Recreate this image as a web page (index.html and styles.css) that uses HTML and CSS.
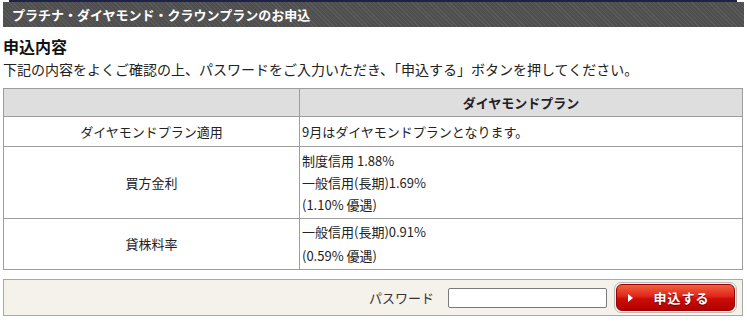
FILE: index.html
```html
<!DOCTYPE html>
<html lang="ja">
<head>
<meta charset="utf-8">
<title>プラチナ・ダイヤモンド・クラウンプランのお申込</title>
<link rel="stylesheet" href="styles.css">
</head>
<body>
<div class="page">
  <div class="topline"></div>
  <h1 class="titlebar">プラチナ・ダイヤモンド・クラウンプランのお申込</h1>
  <h2 class="heading">申込内容</h2>
  <p class="desc">下記の内容をよくご確認の上、パスワードをご入力いただき、「申込する」ボタンを押してください。</p>
  <table class="plan">
    <tr class="r-head">
      <th class="c-left"></th>
      <th class="c-right">ダイヤモンドプラン</th>
    </tr>
    <tr class="r-apply">
      <td class="c-left">ダイヤモンドプラン適用</td>
      <td class="c-right">9月はダイヤモンドプランとなります。</td>
    </tr>
    <tr class="r-buy">
      <td class="c-left">買方金利</td>
      <td class="c-right">制度信用 1.88%<br>一般信用(長期)1.69%<br>(1.10% 優遇)</td>
    </tr>
    <tr class="r-lend">
      <td class="c-left">貸株料率</td>
      <td class="c-right">一般信用(長期)0.91%<br>(0.59% 優遇)</td>
    </tr>
  </table>
  <form class="submitbox">
    <label class="pw-label" for="pw">パスワード</label>
    <input class="pw-input" id="pw" type="password">
    <span class="btn-frame">
      <button class="btn" type="button"><span class="tri"></span><span class="btn-text">申込する</span></button>
    </span>
  </form>
</div>
</body>
</html>
```
FILE: styles.css
```css
* { box-sizing: border-box; }
html, body {
  margin: 0;
  padding: 0;
  background: #fff;
  font-family: "Noto Sans CJK JP", "Noto Sans", sans-serif;
  color: #222;
}
.page {
  padding: 0 3px;
  width: 747px;
}
.topline {
  height: 2px;
  margin: 0 7px 0 6px;
  background: #1e2246;
}
.titlebar {
  margin: 0;
  height: 25px;
  padding-left: 9px;
  font-size: 13px;
  line-height: 25px;
  font-weight: bold;
  color: #fff;
  background-color: #555;
  background-image: repeating-linear-gradient(45deg, #5a5a5a 0, #5a5a5a 1px, #4f4f4f 1px, #4f4f4f 3px);
}
.heading {
  margin: 8px 0 0;
  font-size: 16px;
  line-height: 22px;
  font-weight: bold;
  color: #111;
}
.desc {
  margin: 2px 0 0;
  font-size: 14px;
  line-height: 20px;
  color: #222;
}
.plan {
  margin-top: 9px;
  width: 740px;
  border-collapse: collapse;
  font-size: 13px;
}
.plan th, .plan td {
  border: 1px solid #9d9d9d;
  padding: 0 2px;
  vertical-align: middle;
}
.plan .c-left { width: 296px; text-align: center; }
.plan .c-right { text-align: left; }
.plan th { background: #dedede; font-weight: bold; color: #231d24; }
.plan th.c-right { text-align: center; }
.r-head th { height: 28px; }
.r-apply td { height: 30px; line-height: 22px; }
.r-buy td { height: 72px; line-height: 22px; }
.r-lend td { height: 51px; line-height: 24px; }
.submitbox {
  margin: 9px 0 0;
  width: 740px;
  height: 37px;
  border: 1px solid #a8a8a8;
  background: #f4f2eb;
  display: flex;
  align-items: center;
  justify-content: flex-end;
  padding-right: 5px;
}
.pw-label {
  font-size: 13px;
  color: #333;
  margin-right: 14px;
}
.pw-input {
  width: 159px;
  height: 20px;
  border: 1px solid #7a7a7a;
  border-radius: 2px;
  background: #fff;
  margin: 0 7px 0 0;
  padding: 0;
}
.btn-frame {
  display: block;
  padding: 1px;
  border: 1px solid #b9b9b9;
  border-radius: 7px;
  background: #f2f2f2;
}
.btn {
  display: flex;
  align-items: center;
  width: 119px;
  height: 27px;
  border: 1px solid #9c0000;
  border-radius: 6px;
  background: linear-gradient(#f0603f 0%, #e0261a 45%, #cc0d06 55%, #b30000 100%);
  padding: 0 0 0 11px;
  cursor: pointer;
  font-family: inherit;
}
.tri {
  width: 0;
  height: 0;
  border-top: 4px solid transparent;
  border-bottom: 4px solid transparent;
  border-left: 5px solid #fff;
}
.btn-text {
  flex: 1;
  text-align: center;
  padding-right: 4px;
  font-size: 13px;
  font-weight: bold;
  color: #fff;
  letter-spacing: 1px;
  text-shadow: 0 1px 1px #600;
}
```
